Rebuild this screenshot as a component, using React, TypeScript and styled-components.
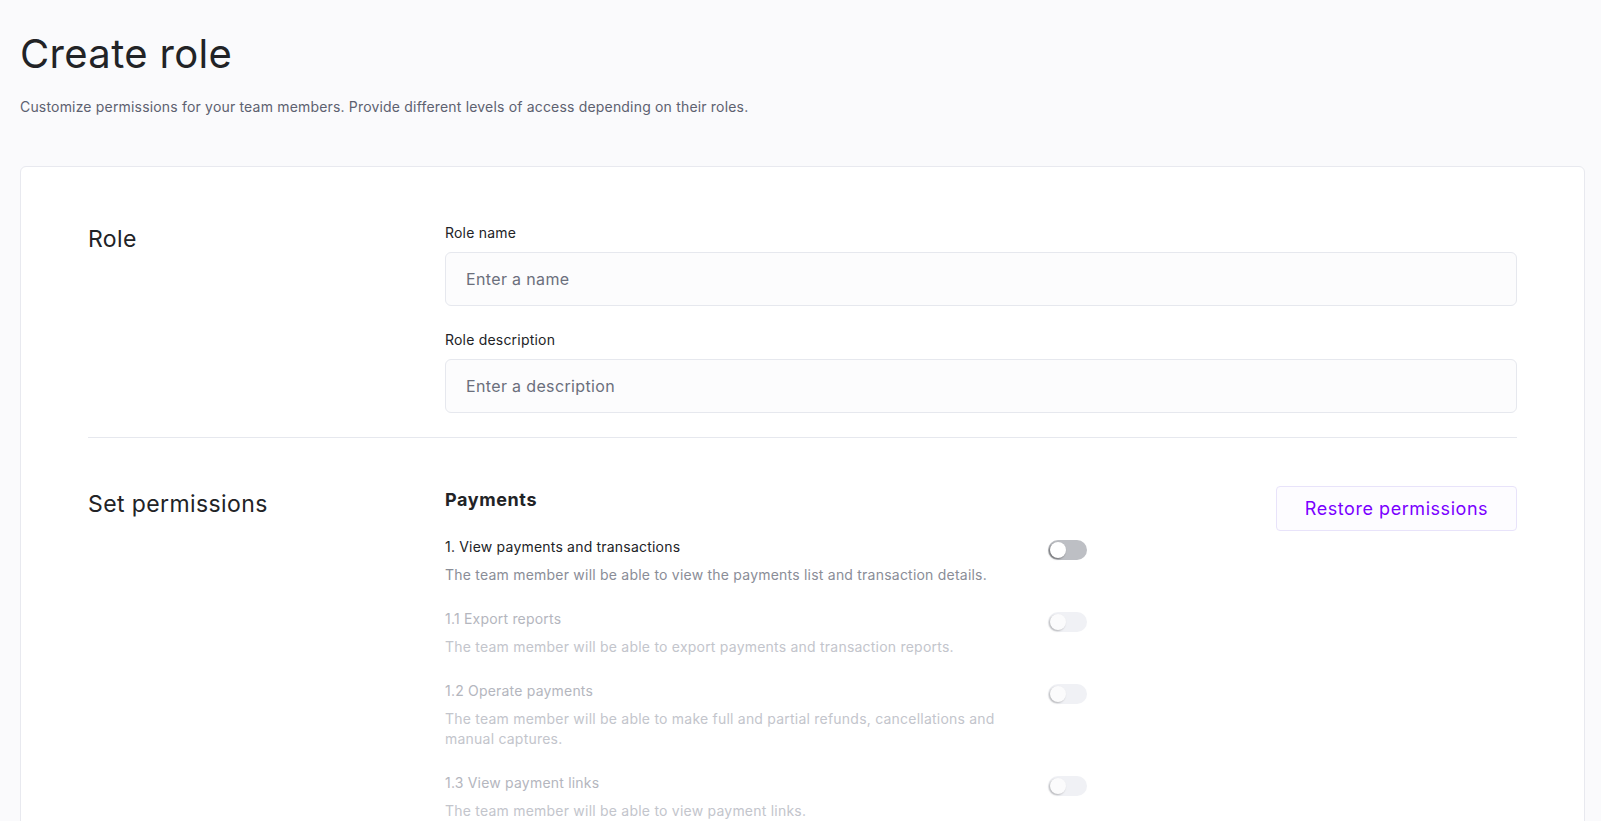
import styled, { createGlobalStyle } from 'styled-components';

const GlobalStyle = createGlobalStyle`
    * {
        box-sizing: border-box;
    }
    body {
        margin: 0;
        background: #fafafc;
        font-family: Inter, "Noto Sans", sans-serif;
        color: #222326;
    }
`;

type Permission = {
    title: string;
    description: string;
    enabled: boolean;
};

const permissions: Permission[] = [
    {
        title: '1. View payments and transactions',
        description: 'The team member will be able to view the payments list and transaction details.',
        enabled: true,
    },
    {
        title: '1.1 Export reports',
        description: 'The team member will be able to export payments and transaction reports.',
        enabled: false,
    },
    {
        title: '1.2 Operate payments',
        description: 'The team member will be able to make full and partial refunds, cancellations and manual captures.',
        enabled: false,
    },
    {
        title: '1.3 View payment links',
        description: 'The team member will be able to view payment links.',
        enabled: false,
    },
];

export default function App() {
    return (
        <>
            <GlobalStyle />
            <Page>
                <Title>Create role</Title>
                <Subtitle>Customize permissions for your team members. Provide different levels of access depending on their roles.</Subtitle>
                <Card>
                    <Section>
                        <SectionTitle>Role</SectionTitle>
                        <Fields>
                            <Field>
                                <Label>Role name</Label>
                                <Input type="text" placeholder="Enter a name" />
                            </Field>
                            <Field>
                                <Label>Role description</Label>
                                <Input type="text" placeholder="Enter a description" />
                            </Field>
                        </Fields>
                    </Section>
                    <Divider />
                    <Section $top={50}>
                        <SectionTitle>Set permissions</SectionTitle>
                        <PermissionsArea>
                            <PermissionList>
                                <GroupTitle>Payments</GroupTitle>
                                {permissions.map((p) => (
                                    <PermissionRow key={p.title}>
                                        <PermissionText>
                                            <PermissionTitle $enabled={p.enabled}>{p.title}</PermissionTitle>
                                            <PermissionDescription $enabled={p.enabled}>{p.description}</PermissionDescription>
                                        </PermissionText>
                                        <Switch $enabled={p.enabled}>
                                            <Knob $enabled={p.enabled} />
                                        </Switch>
                                    </PermissionRow>
                                ))}
                            </PermissionList>
                            <RestoreButton type="button">Restore permissions</RestoreButton>
                        </PermissionsArea>
                    </Section>
                </Card>
            </Page>
        </>
    );
}

const Page = styled.main`
    padding: 30px 16px 0 20px;
    min-height: 100vh;
`;

const Title = styled.h1`
    margin: 0;
    font-size: 40px;
    line-height: 48px;
    font-weight: 400;
    color: #222326;
    letter-spacing: 0.35px;
`;

const Subtitle = styled.p`
    margin: 19px 0 0;
    font-size: 14px;
    line-height: 20px;
    color: #5d6170;
    letter-spacing: 0.18px;
`;

const Card = styled.div`
    margin-top: 49px;
    background: #ffffff;
    border: 1px solid #e8e9ef;
    border-radius: 6px;
    padding: 0 67px;
`;

const Section = styled.section<{ $top?: number }>`
    display: grid;
    grid-template-columns: 357px 1fr;
    padding-top: ${({ $top }) => $top ?? 56}px;
    padding-bottom: 24px;
`;

const SectionTitle = styled.h2`
    margin: 0;
    font-size: 23px;
    line-height: 32px;
    font-weight: 400;
    color: #222326;
    letter-spacing: 0.4px;
`;

const Fields = styled.div`
    display: flex;
    flex-direction: column;
    gap: 24px;
`;

const Field = styled.label`
    display: flex;
    flex-direction: column;
    gap: 9px;
`;

const Label = styled.span`
    font-size: 14px;
    line-height: 20px;
    color: #222326;
    letter-spacing: 0.2px;
`;

const Input = styled.input`
    height: 54px;
    width: 100%;
    padding: 0 20px;
    border: 1px solid #e6e8ee;
    border-radius: 6px;
    background: #fcfcfd;
    font-family: inherit;
    font-size: 16px;
    letter-spacing: 0.35px;
    color: #222326;
    outline: none;

    &::placeholder {
        color: #6b6f7c;
    }
`;

const Divider = styled.hr`
    margin: 0;
    border: 0;
    border-top: 1px solid #e6e8ee;
`;

const PermissionsArea = styled.div`
    display: flex;
    justify-content: space-between;
    align-items: flex-start;
`;

const PermissionList = styled.div`
    width: 642px;
    display: flex;
    flex-direction: column;
    gap: 24px;
`;

const GroupTitle = styled.h3`
    margin: 0 0 1px;
    font-size: 18px;
    line-height: 24px;
    font-weight: 700;
    color: #222326;
    letter-spacing: 0.6px;
`;

const PermissionRow = styled.div`
    display: flex;
    justify-content: space-between;
    align-items: flex-start;
`;

const PermissionText = styled.div`
    width: 560px;
    display: flex;
    flex-direction: column;
    gap: 8px;
`;

const PermissionTitle = styled.span<{ $enabled: boolean }>`
    font-size: 14px;
    line-height: 20px;
    letter-spacing: 0.2px;
    color: ${({ $enabled }) => ($enabled ? '#222326' : '#b4b6be')};
`;

const PermissionDescription = styled.span<{ $enabled: boolean }>`
    font-size: 14px;
    line-height: 20px;
    letter-spacing: 0.22px;
    color: ${({ $enabled }) => ($enabled ? '#8a8d97' : '#c3c5cc')};
`;

const Switch = styled.div<{ $enabled: boolean }>`
    width: 39px;
    height: 20px;
    margin-top: 3px;
    border-radius: 10px;
    padding: 2px;
    display: flex;
    align-items: center;
    background: ${({ $enabled }) => ($enabled ? '#bdbfc4' : '#f0f1f5')};
`;

const Knob = styled.span<{ $enabled: boolean }>`
    width: 16px;
    height: 16px;
    border-radius: 50%;
    background: ${({ $enabled }) => ($enabled ? '#ffffff' : '#fbfbfc')};
    box-shadow: -1px 1px 2px rgba(0, 0, 0, ${({ $enabled }) => ($enabled ? 0.45 : 0.25)});
`;

const RestoreButton = styled.button`
    width: 241px;
    height: 45px;
    margin-top: -2px;
    border: 1px solid #e8e3fa;
    border-radius: 4px;
    background: #fdfcff;
    font-family: inherit;
    font-size: 18px;
    letter-spacing: 0.55px;
    color: #7a00ff;
    cursor: pointer;
`;
